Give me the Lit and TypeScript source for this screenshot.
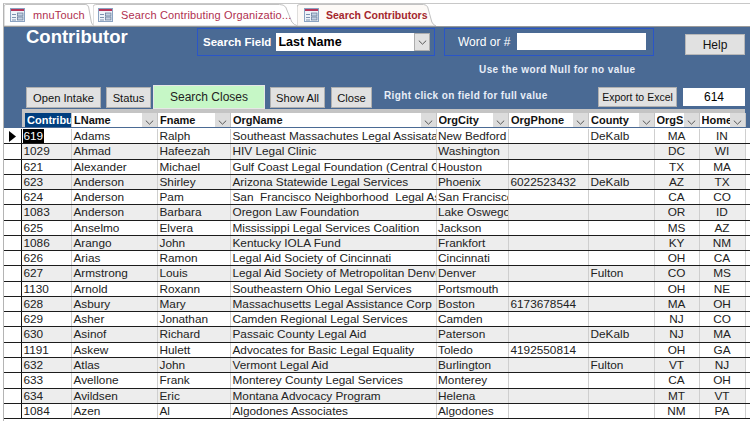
import { LitElement, html, css, svg } from "lit";
import { customElement } from "lit/decorators.js";

const rows: string[][] = [
  ["619","Adams","Ralph","Southeast Massachutes Legal Assisatance","New Bedford","","DeKalb","MA","IN"],
  ["1029","Ahmad","Hafeezah","HIV Legal Clinic","Washington","","","DC","WI"],
  ["621","Alexander","Michael","Gulf Coast Legal Foundation (Central Office)","Houston","","","TX","MA"],
  ["623","Anderson","Shirley","Arizona Statewide Legal Services","Phoenix","6022523432","DeKalb","AZ","TX"],
  ["624","Anderson","Pam","San  Francisco Neighborhood  Legal Assistance","San Francisco","","","CA","CO"],
  ["1083","Anderson","Barbara","Oregon Law Foundation","Lake Oswego","","","OR","ID"],
  ["625","Anselmo","Elvera","Mississippi Legal Services Coalition","Jackson","","","MS","AZ"],
  ["1086","Arango","John","Kentucky IOLA Fund","Frankfort","","","KY","NM"],
  ["626","Arias","Ramon","Legal Aid Society of Cincinnati","Cincinnati","","","OH","CA"],
  ["627","Armstrong","Louis","Legal Aid Society of Metropolitan Denver","Denver","","Fulton","CO","MS"],
  ["1130","Arnold","Roxann","Southeastern Ohio Legal Services","Portsmouth","","","OH","NE"],
  ["628","Asbury","Mary","Massachusetts Legal Assistance Corp","Boston","6173678544","","MA","OH"],
  ["629","Asher","Jonathan","Camden Regional Legal Services","Camden","","","NJ","CO"],
  ["630","Asinof","Richard","Passaic County Legal Aid","Paterson","","DeKalb","NJ","MA"],
  ["1191","Askew","Hulett","Advocates for Basic Legal Equality","Toledo","4192550814","","OH","GA"],
  ["632","Atlas","John","Vermont Legal Aid","Burlington","","Fulton","VT","NJ"],
  ["633","Avellone","Frank","Monterey County Legal Services","Monterey","","","CA","OH"],
  ["634","Avildsen","Eric","Montana Advocacy Program","Helena","","","MT","VT"],
  ["1084","Azen","Al","Algodones Associates","Algodones","","","NM","PA"],
];
const heads = ["LName","Fname","OrgName","OrgCity","OrgPhone","County","OrgS","Home"];
const tabIcon = svg`<svg class="ti" width="15" height="14" viewBox="0 0 15 14"><rect x=".5" y=".5" width="14" height="13" fill="#eef3f9" stroke="#8ba3c2"/><rect x="1" y="1" width="13" height="2" fill="#b5355a"/><path d="M2 6.500h4M2 9.500h4M2 12h4" stroke="#7d93b0"/><rect x="7.500" y="5" width="5.500" height="3" fill="#c3d0e2" stroke="#5f7696" stroke-width=".7"/><rect x="7.500" y="9" width="5.500" height="3" fill="#c3d0e2" stroke="#5f7696" stroke-width=".7"/></svg>`;
const chev = svg`<svg width="9" height="5" viewBox="0 0 9 5"><path d="M.8.600l3.700 3.600L8.200.600" fill="none" stroke="#555" stroke-width="1"/></svg>`;
const tabShape = svg`<svg class="ts" viewBox="0 0 100 22" preserveAspectRatio="none"><path d="M0 22V3Q0 .5 2 .5H91Q93 .5 94 3L97 18Q98 21 100 22Z" fill="currentColor" stroke="#c2c2c2" stroke-width="1" vector-effect="non-scaling-stroke"/></svg>`;

@customElement("app-root")
export class AppRoot extends LitElement {
  static styles = css`
    :host { display: block; width: 750px; height: 421px; overflow: hidden; background: #fff; font-family: "Liberation Sans", Arial, sans-serif; box-sizing: border-box; padding-top: 3px; }
    .frame { height: 418px; margin-left: 3px; border-left: 1px solid #b4b4b4; border-top: 1px solid #c8c8c8; box-sizing: border-box; }
    .tabs { display: flex; height: 22px; background: #fff; }
    .tab { position: relative; display: flex; align-items: center; height: 22px; box-sizing: border-box; font-size: 11px; letter-spacing: .14px; white-space: nowrap; color: #b0304f; flex: none; }
    .tab > span, .tab > .ti { position: relative; }
    .ts { position: absolute; inset: 0; width: 100%; height: 100%; color: #fff; }
    .tab.active { font-weight: bold; letter-spacing: 0; color: #a4262c; font-size: 10.500px; }
    .tab.active .ts { color: #fdfaf7; }
    .ti { flex: none; }
    .form { height: 102px; display: flex; flex-direction: column; background: #4a6a94; border-top: 1px solid #9a9a9a; box-sizing: border-box; }
    .top { display: flex; align-items: flex-start; height: 29px; padding-left: 22px; }
    .title { width: 171px; flex: none; font-size: 18.500px; font-weight: bold; color: #fff; line-height: 20px; }
    .box { margin-top: 1px; height: 28px; border: 1px solid #2a55c8; box-sizing: border-box; display: flex; align-items: center; color: #fff; flex: none; }
    .sf { width: 238px; padding-left: 5px; gap: 5px; font-size: 11.500px; font-weight: bold; }
    .select { flex: 1; margin-right: 4px; height: 18px; background: #fff; color: #000; font-size: 12.500px; display: flex; justify-content: space-between; align-items: center; padding-left: 2px; }
    .arrow { width: 16px; height: 18px; background: #e1e1e1; border: 1px solid #adadad; box-sizing: border-box; display: flex; align-items: center; justify-content: center; }
    .wf { width: 210px; margin-left: 9px; padding-left: 13px; gap: 7px; font-size: 12px; }
    .input { width: 129px; height: 17px; background: #fff; margin-top: -1px; }
    .help { margin: 7px 0 0 31px; width: 60px; height: 21px; background: #e1e1e1; border: 1px solid #b8b8b8; box-sizing: border-box; font-size: 12px; display: flex; align-items: center; justify-content: center; color: #111; flex: none; }
    .hint { height: 29px; box-sizing: border-box; padding: 7px 0 0 475px; line-height: 14px; color: #e8eef8; font-size: 10px; font-weight: bold; letter-spacing: .42px; white-space: nowrap; }
    .bar { display: flex; align-items: flex-start; height: 24px; padding-left: 22px; }
    .btn { height: 21px; margin-top: 2px; background: #e1e1e1; border: 1px solid #b0b0b0; box-sizing: border-box; font-size: 11.200px; display: flex; align-items: center; justify-content: center; color: #111; flex: none; white-space: nowrap; }
    .green { height: 24px; margin-top: 0; background: #c6f7c6; color: #222; border: 1px solid #e6e6e6; font-size: 12px; }
    .note { color: #e8eef8; font-size: 10px; font-weight: bold; letter-spacing: .36px; margin: 4px 0 0 12px; line-height: 14px; width: 214px; flex: none; white-space: nowrap; }
    .exp { width: 79px; font-size: 10.500px; height: 20px; }
    .count { width: 62px; height: 18px; background: #fff; margin: 3px 0 0 6px; font-size: 12px; display: flex; align-items: center; justify-content: center; flex: none; }
    .hrow { display: grid; grid-template-columns: 47px 86px 73px 205.500px 72.500px 80px 65.500px 45px 46px; height: 18px; box-sizing: border-box; padding: 4px 0 0 3px; margin-left: 18px; width: 723px; background: #c4c4c4; }
    .hc { display: flex; align-items: center; justify-content: space-between; background: #fff; font-size: 11px; font-weight: bold; overflow: hidden; white-space: nowrap; padding-left: 2px; color: #111; height: 14px; border-right: 1px solid #c4c4c4; box-sizing: border-box; }
    .hc.sel { background: #003f7f; color: #fff; justify-content: flex-start; }
    .hc span { overflow: hidden; flex: 1; min-width: 0; }
    .harrow { width: 15px; height: 14px; flex: none; background: #dcdcdc; display: flex; align-items: flex-end; justify-content: center; padding-bottom: 2px; box-sizing: border-box; }
    .body { padding-top: 1px; }
    .row { display: grid; grid-template-columns: 18px 50px 86px 73px 205.500px 72.500px 80px 65.500px 45px 46px; height: 15.280px; box-sizing: border-box; border-bottom: 1px solid #1c1c1c; }
    .row.alt > .c { background: #ededed; }
    .c { font-size: 11.800px; line-height: 15px; padding-left: 1.500px; overflow: hidden; white-space: pre; color: #222; border-right: 1px solid #cfcfcf; box-sizing: border-box; }
    .c.m { text-align: center; padding: 0; }
    .lead { background: #fff; border-right: 1px solid #111; display: flex; align-items: center; justify-content: center; }
    .hi { display: inline-block; background: #000; color: #fff; width: 21px; margin-left: -1px; padding-left: 1px; box-sizing: border-box; }
  `;

  render() {
    return html`
      <div class="frame">
        <div class="tabs">
          <div class="tab" style="width:90px;padding-left:6px">${tabShape}${tabIcon}<span style="margin-left:8px">mnuTouch</span></div>
          <div class="tab" style="width:205px;padding-left:5px;margin-left:-1px">${tabShape}${tabIcon}<span style="margin-left:8px">Search Contributing Organizatio...</span></div>
          <div class="tab active" style="width:139px;padding-left:7px;margin-left:-1px">${tabShape}${tabIcon}<span style="margin-left:7px">Search Contributors</span></div>
        </div>
        <div class="form">
          <div class="top">
            <div class="title">Contributor</div>
            <div class="box sf">Search Field
              <div class="select"><b>Last Name</b><div class="arrow">${chev}</div></div>
            </div>
            <div class="box wf">Word or #<div class="input"></div></div>
            <div class="help">Help</div>
          </div>
          <div class="hint">Use the word Null for no value</div>
          <div class="bar">
            <div class="btn" style="width:75px">Open Intake</div>
            <div class="btn" style="width:45px;margin-left:5px">Status</div>
            <div class="btn green" style="width:112px;margin-left:2px">Search Closes</div>
            <div class="btn" style="width:55px;margin-left:5px">Show All</div>
            <div class="btn" style="width:41px;margin-left:6px">Close</div>
            <div class="note">Right click on field for full value</div>
            <div class="btn exp">Export to Excel</div>
            <div class="count">614</div>
          </div>
          <div class="hrow">
            <div class="hc sel"><span>Contribu</span></div>
            ${heads.map(h => html`<div class="hc"><span>${h}</span><div class="harrow">${chev}</div></div>`)}
          </div>
        </div>
        <div class="body">
          ${rows.map((r, i) => html`
            <div class="row ${i % 2 ? "alt" : ""}">
              <div class="lead">${i === 0 ? html`<svg width="7" height="11" viewBox="0 0 7 11"><path d="M0 0l7 5.500L0 11z" fill="#000"/></svg>` : ""}</div>
              ${r.map((v, j) => html`<div class="c ${j > 6 ? "m" : ""}">${i === 0 && j === 0 ? html`<span class="hi">${v}</span>` : v}</div>`)}
            </div>`)}
        </div>
      </div>
    `;
  }
}
